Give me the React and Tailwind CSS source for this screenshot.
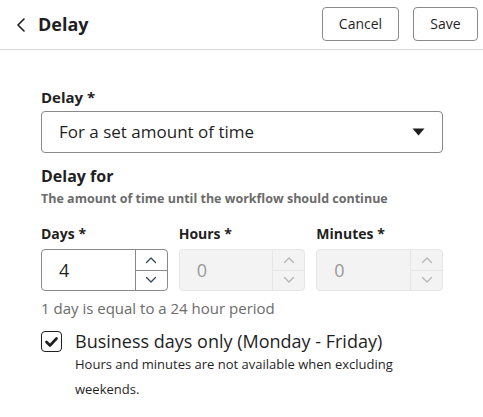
import React from "react";

function Chevron({ dir = "up", color = "#33475b" }) {
  return (
    <svg width="12" height="8" viewBox="0 0 12 8" fill="none">
      {dir === "up" ? (
        <path d="M1.5 6.5 L6 2 L10.5 6.5" stroke={color} strokeWidth="1.3" strokeLinecap="round" strokeLinejoin="round" />
      ) : (
        <path d="M1.5 1.5 L6 6 L10.5 1.5" stroke={color} strokeWidth="1.3" strokeLinecap="round" strokeLinejoin="round" />
      )}
    </svg>
  );
}

function NumberInput({ label, value, disabled }) {
  return (
    <div className="flex flex-col w-[127px]">
      <div className="text-[14px] font-bold text-[#1f1f1f] h-[19px] leading-[19px] mb-[6px]">{label} *</div>
      <div
        className={
          "flex h-[42px] rounded-[4px] border " +
          (disabled ? "border-[#e6e6e6] bg-[#f3f3f3]" : "border-[#8a8a8a] bg-white")
        }
      >
        <div className={"flex-1 flex items-center pl-[17px] text-[18px] " + (disabled ? "text-[#9a9a9a]" : "text-[#1f1f1f]")}>
          {value}
        </div>
        <div className={"w-[32px] flex flex-col border-l " + (disabled ? "border-[#e6e6e6]" : "border-[#8a8a8a]")}>
          <div className={"flex-1 flex items-center justify-center border-b " + (disabled ? "border-[#e6e6e6]" : "border-[#8a8a8a]")}>
            <Chevron dir="up" color={disabled ? "#b5b5b5" : "#33475b"} />
          </div>
          <div className="flex-1 flex items-center justify-center">
            <Chevron dir="down" color={disabled ? "#b5b5b5" : "#33475b"} />
          </div>
        </div>
      </div>
    </div>
  );
}

export default function App() {
  return (
    <div className="w-[483px] h-[417px] bg-white overflow-hidden text-[#1f1f1f]" style={{ fontFamily: '"Open Sans", "Noto Sans", sans-serif' }}>
      <div className="h-[50px] flex items-center justify-between border-b border-[#d9d9d9] pl-[16px] pr-[5px]">
        <div className="flex items-center">
          <svg width="10" height="16" viewBox="0 0 10 16" fill="none" className="mr-[12px]">
            <path d="M8 2 L2 8 L8 14" stroke="#1f1f1f" strokeWidth="1.6" strokeLinecap="round" strokeLinejoin="round" />
          </svg>
          <span className="text-[18px] font-bold">Delay</span>
        </div>
        <div className="flex items-center gap-[14px] mb-[2px]">
          <button className="h-[34px] w-[77px] rounded-[4px] border border-[#8a8a8a] text-[14px] text-[#1f1f1f]">Cancel</button>
          <button className="h-[34px] w-[65px] rounded-[4px] border border-[#8a8a8a] text-[14px] text-[#1f1f1f]">Save</button>
        </div>
      </div>

      <div className="pl-[41px] pr-[40px] pt-[37px]">
        <div className="text-[15px] font-bold leading-[20px] mb-[4px]">Delay *</div>
        <div className="h-[42px] rounded-[4px] border border-[#8a8a8a] flex items-center justify-between pl-[17px] pr-[17px]">
          <span className="text-[17px]">For a set amount of time</span>
          <svg width="13" height="8" viewBox="0 0 13 8">
            <path d="M0.5 0.5 H12.5 L6.5 7.5 Z" fill="#1f1f1f" />
          </svg>
        </div>

        <div className="mt-[13px] text-[16px] font-bold leading-[20px]">Delay for</div>
        <div className="mt-[4px] text-[12.5px] font-bold text-[#6b6b6b] leading-[18px]">
          The amount of time until the workflow should continue
        </div>

        <div className="mt-[16px] flex gap-[11px]">
          <NumberInput label="Days" value="4" />
          <NumberInput label="Hours" value="0" disabled />
          <NumberInput label="Minutes" value="0" disabled />
        </div>

        <div className="mt-[7px] text-[15px] text-[#6b6b6b] leading-[20px]">1 day is equal to a 24 hour period</div>

        <div className="mt-[11px] flex items-start">
          <div className="mt-[2px] w-[21px] h-[21px] rounded-[4px] border-[1.5px] border-[#1f1f1f] flex items-center justify-center">
            <svg width="13" height="10" viewBox="0 0 13 10" fill="none">
              <path d="M1.5 5 L5 8.5 L11.5 1.5" stroke="#1f1f1f" strokeWidth="2.6" strokeLinecap="round" strokeLinejoin="round" />
            </svg>
          </div>
          <div className="ml-[13px]">
            <div className="text-[18px] leading-[24px]">Business days only (Monday - Friday)</div>
            <div className="mt-[-1px] text-[13px] leading-[25px] w-[330px]">
              Hours and minutes are not available when excluding weekends.
            </div>
          </div>
        </div>
      </div>
    </div>
  );
}
